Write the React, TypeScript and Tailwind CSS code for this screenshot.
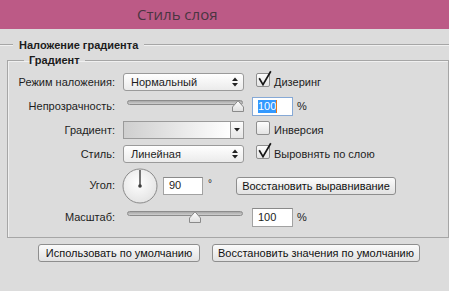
import React from 'react';

function Checkbox({ checked }: { checked?: boolean }) {
  return (
    <span className="relative inline-block w-[14px] h-[14px] shrink-0 rounded-[2px] border border-[#8e8e8e] bg-gradient-to-b from-[#fdfdfd] to-[#e4e4e4]">
      {checked && (
        <svg className="absolute left-[-1px] top-[-4px]" width="17" height="17" viewBox="0 0 17 17">
          <path d="M3.2 8.3 L7 14.6 L14.8 1.2" fill="none" stroke="#161616" strokeWidth="1.7" />
        </svg>
      )}
    </span>
  );
}

function UpDown() {
  return (
    <svg width="6" height="10" viewBox="0 0 6 10">
      <path d="M0 4 L3 0.5 L6 4 Z" fill="#222" />
      <path d="M0 6 L3 9.5 L6 6 Z" fill="#222" />
    </svg>
  );
}

function Select({ value }: { value: string }) {
  return (
    <div className="flex items-center justify-between w-[121px] h-[18px] pl-[7px] pr-[5px] rounded-[3px] border border-[#9a9a9a] bg-gradient-to-b from-[#ffffff] to-[#ebebeb]">
      <span>{value}</span>
      <UpDown />
    </div>
  );
}

function Slider({ at }: { at: number }) {
  return (
    <div className="relative w-[121px] h-[12px] pl-[4px] pr-[1px]">
      <div className="h-[5px] rounded-full border border-[#8c8c8c] bg-gradient-to-b from-[#a8a8a8] to-[#cfcfcf]" />
      <svg className="absolute top-0" style={{ left: at }} width="12" height="12" viewBox="0 0 12 12">
        <defs>
          <linearGradient id="th" x1="0" y1="0" x2="0" y2="1">
            <stop offset="0" stopColor="#ffffff" />
            <stop offset="1" stopColor="#dedede" />
          </linearGradient>
        </defs>
        <path d="M0.5 11.5 V7 L6 0.8 L11.5 7 V11.5 Z" fill="url(#th)" stroke="#8a8a8a" strokeWidth="1" />
      </svg>
    </div>
  );
}

function NumField({ value, focused }: { value: string; focused?: boolean }) {
  return (
    <div
      className={`flex items-center w-[41px] h-[19px] pl-[5px] bg-white border ${
        focused ? 'border-[#86a9d6]' : 'border-[#a2a2a2] border-t-[#8a8a8a]'
      }`}
    >
      {focused ? (
        <>
          <span className="bg-[#3399ff] text-white leading-[13px]">{value}</span>
          <span className="w-[1px] h-[13px] bg-[#e27a1c]" />
        </>
      ) : (
        <span>{value}</span>
      )}
    </div>
  );
}

function Button({ children, w }: { children: React.ReactNode; w: string }) {
  return (
    <button
      className={`${w} h-[18px] rounded-[3px] border border-[#8e8e8e] bg-gradient-to-b from-[#fbfbfb] to-[#e2e2e2] text-[#111] leading-[16px]`}
    >
      {children}
    </button>
  );
}

function Row({ label, children, h = 'h-[20px]' }: { label: string; children: React.ReactNode; h?: string }) {
  return (
    <div className={`flex items-center ${h}`}>
      <span className="w-[108px] text-right pr-[1px] mr-[7px]">{label}</span>
      {children}
    </div>
  );
}

function Dial() {
  return (
    <svg width="36" height="36" viewBox="0 0 36 36" className="ml-[-1px]">
      <defs>
        <radialGradient id="dl" cx="0.45" cy="0.4" r="0.65">
          <stop offset="0" stopColor="#ffffff" />
          <stop offset="1" stopColor="#e2e2e2" />
        </radialGradient>
      </defs>
      <circle cx="18" cy="18" r="17" fill="url(#dl)" stroke="#8a8a8a" />
      <line x1="18" y1="18" x2="18" y2="2" stroke="#4a4a4a" strokeWidth="1.5" />
      <circle cx="18" cy="18" r="1.8" fill="#3c3c3c" />
    </svg>
  );
}

export default function App() {
  return (
    <div className="w-[449px] h-[291px] overflow-hidden bg-[#dcdcdc] font-['Liberation_Sans',Arial,sans-serif] text-[11px] text-[#1c1c1c]">
      {/* title bar */}
      <div className="h-[29px] bg-[#bc5a86] pl-[137px] font-['Open_Sans',sans-serif] text-[15px] leading-[29px] text-[#4a3541]">
        Стиль слоя
      </div>

      <div className="pl-[7px]">
        {/* section header */}
        <div className="flex items-center gap-[6px] ml-[-7px] mt-[9px] h-[14px]">
          <div className="w-[13px] h-[2px] border-t border-[#a6a6a6] border-b-[#f0f0f0] border-b" />
          <span className="font-bold leading-[14px]">Наложение градиента</span>
          <div className="flex-1 h-[2px] border-t border-b border-t-[#a6a6a6] border-b-[#f0f0f0]" />
        </div>

        <fieldset className="mt-[1px] w-[442px] border border-[#a6a6a6] shadow-[inset_1px_1px_0_#f0f0f0]">
          <legend className="ml-[16px] px-[5px] font-bold leading-[14px]">Градиент</legend>

          <div className="flex flex-col gap-[4px] pt-[5px] pb-[10px]">
            <Row label="Режим наложения:">
              <Select value="Нормальный" />
              <span className="ml-[12px] mr-[4px]"><Checkbox checked /></span>
              <span>Дизеринг</span>
            </Row>

            <Row label="Непрозрачность:">
              <Slider at={109} />
              <span className="ml-[8px]"><NumField value="100" focused /></span>
              <span className="ml-[4px]">%</span>
            </Row>

            <Row label="Градиент:">
              <div className="flex w-[121px] h-[18px] border border-[#9a9a9a]">
                <div className="flex-1 bg-gradient-to-r from-[#cfcfcf] to-[#ffffff]" />
                <div className="flex items-center justify-center w-[13px] border-l border-[#9a9a9a] bg-gradient-to-b from-[#fdfdfd] to-[#e6e6e6]">
                  <svg width="6" height="4" viewBox="0 0 6 4">
                    <path d="M0 0 L6 0 L3 3.5 Z" fill="#222" />
                  </svg>
                </div>
              </div>
              <span className="ml-[12px] mr-[4px]"><Checkbox /></span>
              <span>Инверсия</span>
            </Row>

            <Row label="Стиль:">
              <Select value="Линейная" />
              <span className="ml-[12px] mr-[4px]"><Checkbox checked /></span>
              <span>Выровнять по слою</span>
            </Row>

            <Row label="Угол:" h="h-[35px]">
              <Dial />
              <span className="ml-[5px]">
                <div className="flex items-center w-[40px] h-[18px] pl-[5px] bg-white border border-[#a2a2a2] border-t-[#8a8a8a]">90</div>
              </span>
              <span className="ml-[5px] self-start mt-[8px] text-[10px]">°</span>
              <span className="ml-[24px]">
                <Button w="w-[160px]">Восстановить выравнивание</Button>
              </span>
            </Row>

            <Row label="Масштаб:">
              <Slider at={66} />
              <span className="ml-[8px]"><NumField value="100" /></span>
              <span className="ml-[4px]">%</span>
            </Row>
          </div>
        </fieldset>
      </div>

      <div className="flex gap-[12px] pl-[38px] mt-[6px]">
        <Button w="w-[162px]">Использовать по умолчанию</Button>
        <Button w="w-[208px]">Восстановить значения по умолчанию</Button>
      </div>
    </div>
  );
}
